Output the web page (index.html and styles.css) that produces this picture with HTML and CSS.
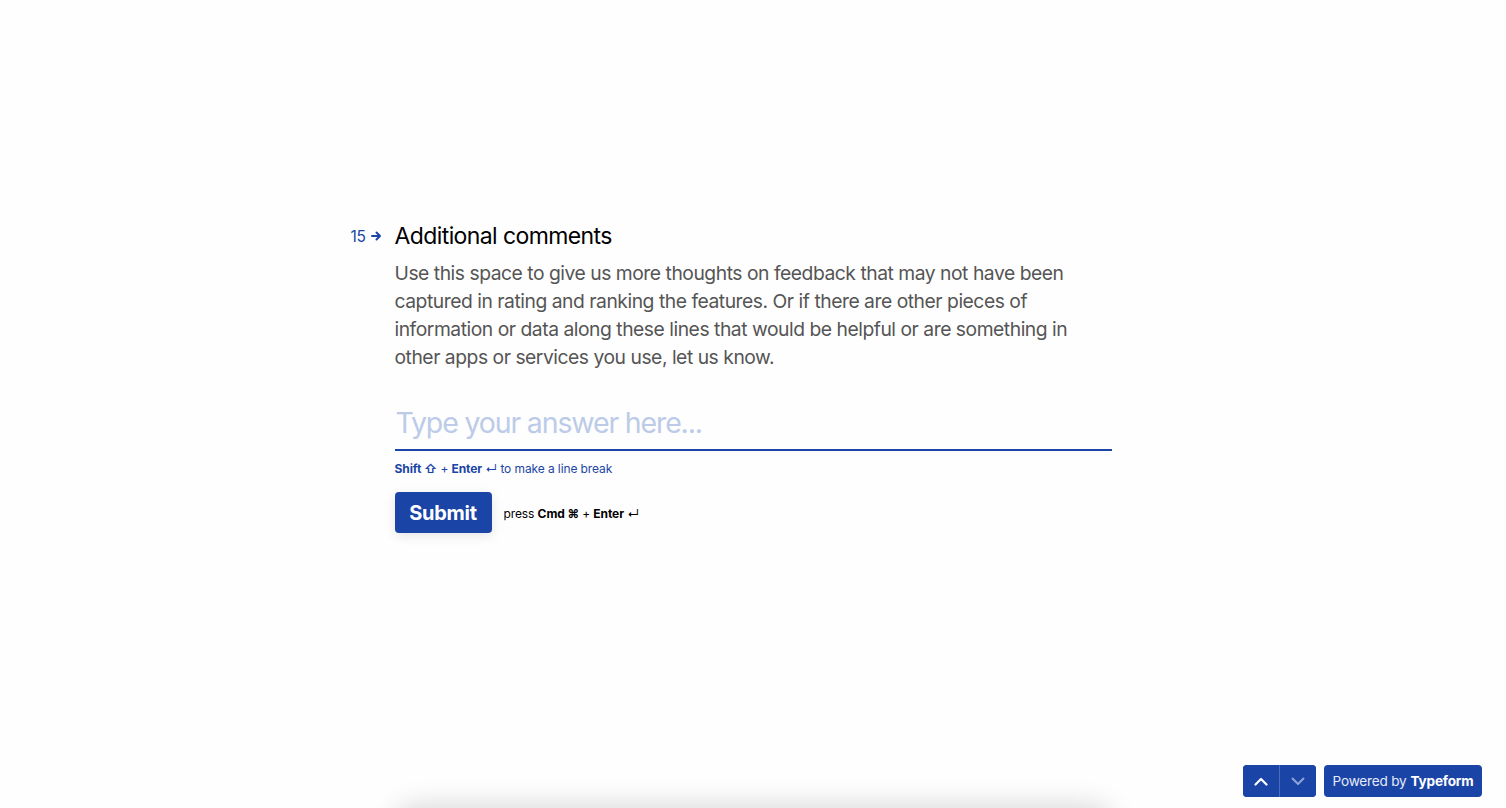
FILE: index.html
```html
<!DOCTYPE html>
<html lang="en">
<head>
<meta charset="utf-8">
<title>Additional comments</title>
<link rel="stylesheet" href="styles.css">
</head>
<body>
<main class="page">
  <section class="question">
    <div class="q-head">
      <div class="q-num">15<svg class="q-arrow" width="11" height="10" viewBox="0 0 11 10"><path d="M1 5h8M5.5 1.5 9 5l-3.5 3.5" fill="none" stroke="currentColor" stroke-width="2" stroke-linecap="round" stroke-linejoin="round"/></svg></div>
      <h1 class="q-title">Additional comments</h1>
    </div>
    <p class="q-desc">Use this space to give us more thoughts on feedback that may not have been captured in rating and ranking the features. Or if there are other pieces of information or data along these lines that would be helpful or are something in other apps or services you use, let us know.</p>
    <div class="answer">
      <div class="placeholder">Type your answer here...</div>
    </div>
    <div class="hint"><b>Shift ⇧</b> + <b>Enter</b> ↵ to make a line break</div>
    <div class="actions">
      <button class="submit">Submit</button>
      <span class="press">press <b>Cmd ⌘</b> + <b>Enter</b> ↵</span>
    </div>
  </section>
</main>
<div class="bottom-shade"></div>
<div class="footer-tools">
  <div class="nav">
    <button class="nav-btn up"><svg width="14" height="9" viewBox="0 0 14 9"><path d="M1.5 7.5 7 2l5.5 5.5" fill="none" stroke="currentColor" stroke-width="2.2" stroke-linecap="round" stroke-linejoin="round"/></svg></button>
    <button class="nav-btn down"><svg width="14" height="9" viewBox="0 0 14 9"><path d="M1.5 1.5 7 7l5.5-5.5" fill="none" stroke="currentColor" stroke-width="2" stroke-linecap="round" stroke-linejoin="round"/></svg></button>
  </div>
  <a class="powered">Powered by <b>Typeform</b></a>
</div>
</body>
</html>
```
FILE: styles.css
```css
* { box-sizing: border-box; }
html, body { margin: 0; padding: 0; height: 100%; }
body {
  background: #fefefe;
  font-family: Inter, "Noto Sans", sans-serif;
  color: #000;
  overflow: hidden;
}
.page {
  display: flex;
  justify-content: center;
  padding-top: 220px;
}
.question {
  width: 717px;
  display: flex;
  flex-direction: column;
}
.q-head {
  display: flex;
  align-items: center;
  margin-left: -45px;
  height: 32px;
}
.q-num {
  width: 45px;
  display: flex;
  align-items: center;
  gap: 5px;
  font-size: 15.5px;
  color: #1b45a6;
  padding-left: 1px;
  letter-spacing: -0.2px;
}
.q-title {
  margin: 0;
  font-size: 23px;
  font-weight: 400;
  letter-spacing: -0.6px;
  line-height: 32px;
}
.q-desc {
  margin: 7px 0 0;
  font-size: 19.3px;
  line-height: 28px;
  color: #555;
  letter-spacing: -0.47px;
}
.answer {
  margin-top: 22px;
  border-bottom: 2px solid #1b45a6;
  height: 58px;
  display: flex;
  align-items: center;
}
.placeholder {
  font-size: 28.5px;
  color: #bccbe8;
  letter-spacing: -1.15px;
  padding-left: 1px;
  margin-top: 2px;
}
.hint {
  margin-top: 10px;
  font-size: 12px;
  color: #1b45a6;
  line-height: 16px;
  letter-spacing: -0.1px;
}
.hint b { font-weight: 700; }
.actions {
  margin-top: 15px;
  display: flex;
  align-items: center;
  gap: 12px;
}
.submit {
  height: 41px;
  width: 97px;
  border: none;
  border-radius: 4px;
  background: #1b44a7;
  color: #fff;
  font-family: Inter, "Noto Sans", sans-serif;
  font-weight: 700;
  font-size: 20px;
  letter-spacing: -0.3px;
  box-shadow: 0 3px 12px rgba(0, 0, 0, 0.1);
  padding: 0;
}
.press {
  font-size: 12px;
  color: #000;
  margin-top: 2px;
  letter-spacing: -0.1px;
}
.bottom-shade {
  position: fixed;
  left: 395px;
  width: 717px;
  bottom: -40px;
  height: 40px;
  border-radius: 20px;
  box-shadow: 0 -2px 28px rgba(0, 0, 0, 0.16);
  background: #fefefe;
}
.footer-tools {
  position: fixed;
  right: 24px;
  bottom: 11px;
  display: flex;
  gap: 8px;
}
.nav {
  display: flex;
  height: 32px;
  border-radius: 4px;
  overflow: hidden;
  background: #1b44a7;
}
.nav-btn {
  width: 36.5px;
  height: 32px;
  border: none;
  background: #1b44a7;
  padding: 0;
  display: flex;
  align-items: center;
  justify-content: center;
}
.nav-btn.up { color: #fff; border-right: 1px solid #4a6cc0; }
.nav-btn.down { color: #8ea4d9; }
.powered {
  height: 32px;
  width: 158px;
  border-radius: 4px;
  background: #1b44a7;
  color: #e6ebf7;
  font-size: 13.6px;
  display: flex;
  align-items: center;
  justify-content: center;
  letter-spacing: -0.2px;
}
.powered b { color: #fff; font-weight: 700; margin-left: 4px; }
```
